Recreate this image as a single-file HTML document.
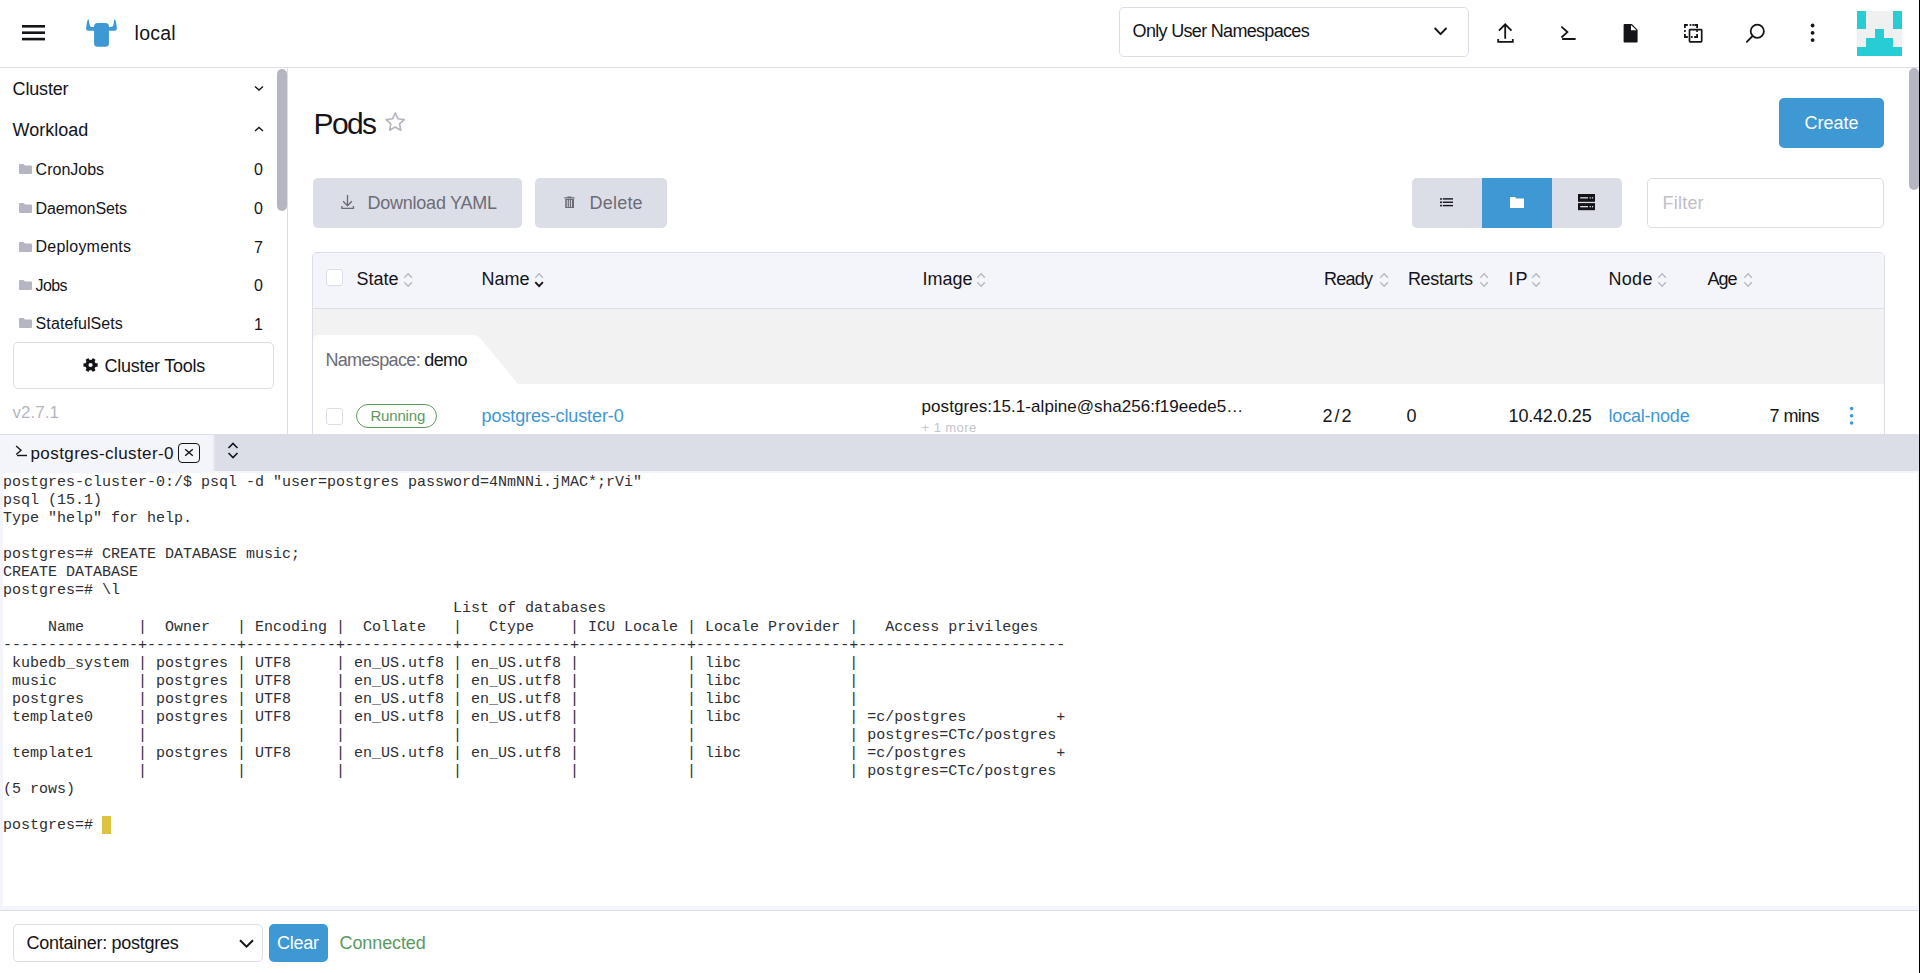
<!DOCTYPE html>
<html><head><meta charset="utf-8"><title>Rancher</title><style>
*{margin:0;padding:0;box-sizing:border-box}
html,body{width:1920px;height:973px;overflow:hidden;background:#fff;font-family:"Liberation Sans", sans-serif}
.a{position:absolute}
.t{position:absolute;white-space:nowrap;line-height:1}
.term{position:absolute;left:3px;top:474px;font-family:"Liberation Mono", monospace;font-size:15px;line-height:18.06px;color:#2e2e34;white-space:pre}
</style></head>
<body>

<!-- header -->
<div class="a" style="left:0;top:67px;width:1920px;height:1px;background:#dcdee7"></div>
<div class="a" style="left:1119px;top:7px;width:350px;height:50px;border:1px solid #dcdee7;border-radius:5px"></div>
<!-- sidebar -->
<div class="a" style="left:287px;top:68px;width:1px;height:366px;background:#dcdee7"></div>
<div class="a" style="left:277px;top:69px;width:10px;height:142px;background:#b6b6c2;border-radius:5px"></div>
<div class="a" style="left:13px;top:342px;width:261px;height:47px;border:1px solid #dcdee7;border-radius:5px"></div>
<!-- main scrollbar -->
<div class="a" style="left:1909px;top:68px;width:10px;height:122px;background:#b6b6c2;border-radius:5px"></div>
<!-- buttons -->
<div class="a" style="left:313px;top:178px;width:209px;height:50px;background:#dcdee7;border-radius:5px"></div>
<div class="a" style="left:535px;top:178px;width:132px;height:50px;background:#dcdee7;border-radius:5px"></div>
<div class="a" style="left:1779px;top:98px;width:105px;height:50px;background:#3d98d3;border-radius:5px"></div>
<div class="a" style="left:1412px;top:178px;width:210px;height:50px;background:#dcdee7;border-radius:5px"></div>
<div class="a" style="left:1482px;top:178px;width:70px;height:50px;background:#3d98d3"></div>
<div class="a" style="left:1647px;top:178px;width:237px;height:50px;border:1px solid #dcdee7;border-radius:5px"></div>
<!-- table -->
<div class="a" style="left:312px;top:252px;width:1573px;height:200px;border:1px solid #dcdee7;border-radius:5px 5px 0 0;background:#fff"></div>
<div class="a" style="left:313px;top:253px;width:1571px;height:55px;background:#f4f5fa;border-radius:4px 4px 0 0"></div>
<div class="a" style="left:313px;top:308px;width:1571px;height:1px;background:#dcdee7"></div>
<div class="a" style="left:313px;top:309px;width:1571px;height:75px;background:#f2f2f2"></div>
<svg class="a" style="left:313px;top:335px" width="210" height="49" viewBox="0 0 210 49"><path d="M0 49 L0 6 Q0 0 6 0 L160 0 Q165 0 168 4 L205 49 Z" fill="#fff"/></svg>
<div class="a" style="left:356px;top:404px;width:81px;height:24px;border:1px solid #5d995d;border-radius:12px"></div>
<!-- terminal panel -->
<div class="a" style="left:0;top:434px;width:1920px;height:539px;background:#f4f5fa"></div>
<div class="a" style="left:0;top:434px;width:1920px;height:1px;background:#dcdee7"></div>
<div class="a" style="left:215px;top:435px;width:1705px;height:36px;background:#dcdee7"></div>
<div class="a" style="left:213px;top:435px;width:2px;height:36px;background:#e8e9f0"></div>
<div class="a" style="left:3px;top:473px;width:1914px;height:433px;background:#fff"></div>
<div class="a" style="left:0;top:910px;width:1920px;height:1px;background:#dcdee7"></div>
<div class="a" style="left:0;top:911px;width:1920px;height:62px;background:#fff"></div>
<div class="a" style="left:13px;top:924px;width:250px;height:38px;border:1px solid #dcdee7;border-radius:5px"></div>
<div class="a" style="left:269px;top:924px;width:59px;height:38px;background:#3d98d3;border-radius:5px"></div>
<div class="a" style="left:102px;top:816px;width:9px;height:18px;background:#dbc33f"></div>

<div id="local" class="t" style="left:134.6px;top:24.19px;font-size:19.5px;color:#141419;letter-spacing:0.250px;">local</div>
<div id="ns" class="t" style="left:1132.6px;top:21.76px;font-size:18px;color:#141419;letter-spacing:-0.684px;">Only User Namespaces</div>
<div id="cluster" class="t" style="left:12.6px;top:79.76px;font-size:18px;color:#141419;letter-spacing:-0.167px;">Cluster</div>
<div id="workload" class="t" style="left:12.6px;top:120.76px;font-size:18px;color:#141419;letter-spacing:0.000px;">Workload</div>
<div id="s0" class="t" style="left:35.6px;top:161.86px;font-size:16px;color:#141419;letter-spacing:0.000px;">CronJobs</div>
<div id="s1" class="t" style="left:35.6px;top:200.86px;font-size:16px;color:#141419;letter-spacing:-0.111px;">DaemonSets</div>
<div id="s2" class="t" style="left:35.6px;top:239.36px;font-size:16px;color:#141419;letter-spacing:0.200px;">Deployments</div>
<div id="s3" class="t" style="left:35.6px;top:277.86px;font-size:16px;color:#141419;letter-spacing:-0.668px;">Jobs</div>
<div id="s4" class="t" style="left:35.6px;top:316.36px;font-size:16px;color:#141419;letter-spacing:0.091px;">StatefulSets</div>
<div id="ctools" class="t" style="left:104.6px;top:357.06px;font-size:18px;color:#141419;letter-spacing:-0.250px;">Cluster Tools</div>
<div id="ver" class="t" style="left:12.6px;top:403.61px;font-size:17px;color:#b6b6c2;letter-spacing:0.000px;">v2.7.1</div>
<div id="pods" class="t" style="left:313.6px;top:109.30px;font-size:30px;color:#141419;letter-spacing:-1.667px;">Pods</div>
<div id="dl" class="t" style="left:367.6px;top:193.76px;font-size:18px;color:#6c6c76;letter-spacing:-0.250px;">Download YAML</div>
<div id="del" class="t" style="left:589.6px;top:193.76px;font-size:18px;color:#6c6c76;letter-spacing:0.200px;">Delete</div>
<div id="create" class="t" style="left:1804.6px;top:113.76px;font-size:18px;color:#ffffff;letter-spacing:0.000px;">Create</div>
<div id="filter" class="t" style="left:1662.6px;top:193.76px;font-size:18px;color:#c0c0ca;letter-spacing:0.200px;">Filter</div>
<div id="h0" class="t" style="left:356.4px;top:270.26px;font-size:18px;color:#141419;letter-spacing:0.000px;">State</div>
<div id="h1" class="t" style="left:481.4px;top:270.26px;font-size:18px;color:#141419;letter-spacing:0.000px;">Name</div>
<div id="h2" class="t" style="left:922.4px;top:270.26px;font-size:18px;color:#141419;letter-spacing:0.000px;">Image</div>
<div id="h3" class="t" style="left:1323.9px;top:270.26px;font-size:18px;color:#141419;letter-spacing:-0.750px;">Ready</div>
<div id="h4" class="t" style="left:1407.9px;top:270.26px;font-size:18px;color:#141419;letter-spacing:-0.285px;">Restarts</div>
<div id="h5" class="t" style="left:1508.4px;top:270.26px;font-size:18px;color:#141419;letter-spacing:2.000px;">IP</div>
<div id="h6" class="t" style="left:1608.4px;top:270.26px;font-size:18px;color:#141419;letter-spacing:0.333px;">Node</div>
<div id="h7" class="t" style="left:1707.4px;top:270.26px;font-size:18px;color:#141419;letter-spacing:-1.000px;">Age</div>
<div id="nsl" class="t" style="left:325.4px;top:350.76px;font-size:18px;color:#141419;letter-spacing:-0.643px;"><span style="color:#6c6c76">Namespace:</span> demo</div>
<div id="run" class="t" style="left:370.4px;top:407.70px;font-size:15px;color:#5d995d;letter-spacing:-0.167px;">Running</div>
<div id="link" class="t" style="left:481.6px;top:406.76px;font-size:18px;color:#3d98d3;letter-spacing:-0.118px;">postgres-cluster-0</div>
<div id="img" class="t" style="left:921.6px;top:398.11px;font-size:17px;color:#141419;letter-spacing:0.056px;">postgres:15.1-alpine@sha256:f19eede5…</div>
<div id="more" class="t" style="left:921.6px;top:420.60px;font-size:13px;color:#c4c4cc;letter-spacing:0.429px;">+ 1 more</div>
<div id="r3" class="t" style="left:1322.6px;top:406.76px;font-size:18px;color:#141419;letter-spacing:2.000px;">2/2</div>
<div id="r4" class="t" style="left:1406.6px;top:406.76px;font-size:18px;color:#141419;letter-spacing:10.000px;">0</div>
<div id="r5" class="t" style="left:1508.6px;top:406.76px;font-size:18px;color:#141419;letter-spacing:-0.222px;">10.42.0.25</div>
<div id="r6" class="t" style="left:1608.6px;top:406.76px;font-size:18px;color:#3d98d3;letter-spacing:-0.222px;">local-node</div>
<div id="r7" class="t" style="left:1769.6px;top:406.76px;font-size:18px;color:#141419;letter-spacing:-0.600px;">7 mins</div>
<div id="tab" class="t" style="left:30.5px;top:444.51px;font-size:17px;color:#141419;letter-spacing:0.412px;">postgres-cluster-0</div>
<div id="cont" class="t" style="left:26.6px;top:933.51px;font-size:18px;color:#141419;letter-spacing:-0.278px;">Container: postgres</div>
<div id="clear" class="t" style="left:277.1px;top:933.51px;font-size:18px;color:#ffffff;letter-spacing:-0.250px;">Clear</div>
<div id="conn" class="t" style="left:339.6px;top:933.51px;font-size:18px;color:#5d995d;letter-spacing:-0.125px;">Connected</div>
<div class="t" style="left:240px;width:23px;text-align:right;top:162.46px;font-size:16px;color:#141419">0</div>
<div class="t" style="left:240px;width:23px;text-align:right;top:201.46px;font-size:16px;color:#141419">0</div>
<div class="t" style="left:240px;width:23px;text-align:right;top:239.96px;font-size:16px;color:#141419">7</div>
<div class="t" style="left:240px;width:23px;text-align:right;top:278.46px;font-size:16px;color:#141419">0</div>
<div class="t" style="left:240px;width:23px;text-align:right;top:316.96px;font-size:16px;color:#141419">1</div>
<svg class="a" style="left:22px;top:24px" width="24" height="17" viewBox="0 0 24 17"><rect x="0" y="1" width="23" height="2.6" fill="#141419"/><rect x="0" y="7.4" width="23" height="2.6" fill="#141419"/><rect x="0" y="13.8" width="23" height="2.6" fill="#141419"/></svg><svg class="a" style="left:85px;top:18px" width="33" height="30" viewBox="0 0 33 30"><rect x="9.05" y="5.1" width="14.9" height="23.7" rx="3.6" fill="#3d98d3"/><path d="M10 8.9 L6.9 8.9 Q4.6 8.9 4.5 6.3 L3.6 1.1 Q2.4 2 1.9 4.5 L1.1 10.6 Q1.1 12.8 3.4 12.8 L10 12.8 Z" fill="#3d98d3"/><path d="M 23 8.9 L 26.1 8.9 Q 28.4 8.9 28.5 6.3 L 29.4 1.1 Q 30.6 2 31.1 4.5 L 31.9 10.6 Q 31.9 12.8 29.6 12.8 L 23 12.8 Z" fill="#3d98d3"/></svg><svg class="a" style="left:1433px;top:26px" width="16" height="11" viewBox="0 0 16 11"><path d="M2.2 2.5 L7.6 8.2 L13 2.5" fill="none" stroke="#141419" stroke-width="1.9" stroke-linecap="round" stroke-linejoin="round"/></svg><svg class="a" style="left:1496px;top:23px" width="20" height="21" viewBox="0 0 20 21"><path d="M9.2 1.6 L9.2 15.7 M2.9 7.6 L9.2 1.3 L15.5 7.6 M2.2 16 L2.2 18.8 L16.8 18.8 L16.8 16" fill="none" stroke="#141419" stroke-width="1.8"/></svg><svg class="a" style="left:1560px;top:25px" width="17" height="17" viewBox="0 0 17 17"><path d="M1.4 1.7 L7.4 7.1 L1.4 12.5" fill="none" stroke="#141419" stroke-width="1.8"/><path d="M2.9 14 L14.9 14" stroke="#141419" stroke-width="1.9" stroke-linecap="round"/></svg><svg class="a" style="left:1623px;top:24px" width="15" height="19" viewBox="0 0 15 19"><path d="M0.6 0.9 Q0.6 0.1 1.4 0.1 L8.8 0.1 L14.6 5.8 L14.6 17.8 Q14.6 18.6 13.8 18.6 L1.4 18.6 Q0.6 18.6 0.6 17.8 Z" fill="#141419"/><path d="M8 0.9 L8 6.2 L13.6 6.2 Z" fill="#fff"/></svg><svg class="a" style="left:1683px;top:23px" width="21" height="21" viewBox="0 0 21 21"><rect x="6.5" y="6.6" width="12.2" height="12.2" rx="0.6" fill="none" stroke="#141419" stroke-width="1.7"/><path d="M1.9 5 L1.9 2 L4.8 2 M11.4 2 L14.1 2 L14.1 5 M14.1 11.1 L14.1 14 L11.2 14 M4.8 14 L1.9 14 L1.9 11.1" fill="none" stroke="#fff" stroke-width="3.2"/><path d="M1.9 5 L1.9 2 L4.8 2 M11.4 2 L14.1 2 L14.1 5 M14.1 11.1 L14.1 14 L11.2 14 M4.8 14 L1.9 14 L1.9 11.1" fill="none" stroke="#141419" stroke-width="1.8"/><g fill="#141419"><rect x="6.6" y="1.1" width="1.8" height="1.8"/><rect x="9.3" y="1.1" width="1.8" height="1.8"/><rect x="1" y="7.1" width="1.8" height="1.8"/><rect x="13.2" y="7.1" width="1.8" height="1.8"/><rect x="7.9" y="13.1" width="1.8" height="1.8"/></g></svg><svg class="a" style="left:1745px;top:23px" width="21" height="21" viewBox="0 0 21 21"><circle cx="12.3" cy="8.2" r="6.6" fill="none" stroke="#141419" stroke-width="1.8"/><path d="M7.6 13 L1.8 18.8" stroke="#141419" stroke-width="1.8" stroke-linecap="round"/></svg><svg class="a" style="left:1809px;top:23px" width="7" height="20" viewBox="0 0 7 20"><circle cx="3.6" cy="2.5" r="1.9" fill="#141419"/><circle cx="3.6" cy="9.8" r="1.9" fill="#141419"/><circle cx="3.6" cy="17.1" r="1.9" fill="#141419"/></svg><svg class="a" style="left:1857px;top:11px" width="45" height="45" viewBox="0 0 5 5" shape-rendering="crispEdges"><rect width="5" height="5" fill="#f0f0f0"/><rect x="0" y="0" width="1" height="2" fill="#27ccd4"/><rect x="4" y="0" width="1" height="2" fill="#27ccd4"/><rect x="2" y="2" width="1" height="1" fill="#27ccd4"/><rect x="1" y="3" width="3" height="1" fill="#27ccd4"/><rect x="0" y="4" width="5" height="1" fill="#27ccd4"/></svg><svg class="a" style="left:253px;top:84px" width="12" height="8" viewBox="0 0 12 8"><path d="M2 2.5 L6 6.1 L10 2.5" fill="none" stroke="#141419" stroke-width="1.4"/></svg><svg class="a" style="left:253px;top:125px" width="12" height="8" viewBox="0 0 12 8"><path d="M2 6 L6 2.4 L10 6" fill="none" stroke="#141419" stroke-width="1.4"/></svg><svg class="a" style="left:19px;top:164px" width="13" height="10" viewBox="0 0 13 10"><path d="M0 1 Q0 0 1 0 L4.5 0 L6 1.5 L12 1.5 Q13 1.5 13 2.5 L13 9 Q13 10 12 10 L1 10 Q0 10 0 9 Z" fill="#b6b6c2"/></svg><svg class="a" style="left:19px;top:203px" width="13" height="10" viewBox="0 0 13 10"><path d="M0 1 Q0 0 1 0 L4.5 0 L6 1.5 L12 1.5 Q13 1.5 13 2.5 L13 9 Q13 10 12 10 L1 10 Q0 10 0 9 Z" fill="#b6b6c2"/></svg><svg class="a" style="left:19px;top:242px" width="13" height="10" viewBox="0 0 13 10"><path d="M0 1 Q0 0 1 0 L4.5 0 L6 1.5 L12 1.5 Q13 1.5 13 2.5 L13 9 Q13 10 12 10 L1 10 Q0 10 0 9 Z" fill="#b6b6c2"/></svg><svg class="a" style="left:19px;top:280px" width="13" height="10" viewBox="0 0 13 10"><path d="M0 1 Q0 0 1 0 L4.5 0 L6 1.5 L12 1.5 Q13 1.5 13 2.5 L13 9 Q13 10 12 10 L1 10 Q0 10 0 9 Z" fill="#b6b6c2"/></svg><svg class="a" style="left:19px;top:318px" width="13" height="10" viewBox="0 0 13 10"><path d="M0 1 Q0 0 1 0 L4.5 0 L6 1.5 L12 1.5 Q13 1.5 13 2.5 L13 9 Q13 10 12 10 L1 10 Q0 10 0 9 Z" fill="#b6b6c2"/></svg><svg class="a" style="left:83px;top:357px" width="16" height="16" viewBox="0 0 16 16"><g transform="translate(7.56 8)" fill="#141419"><circle r="5.3"/><rect x="-7.1" y="-1.7" width="14.2" height="3.4" rx="0.5"/><rect x="-7.1" y="-1.7" width="14.2" height="3.4" rx="0.5" transform="rotate(60)"/><rect x="-7.1" y="-1.7" width="14.2" height="3.4" rx="0.5" transform="rotate(120)"/><circle r="2.1" fill="#fff"/></g></svg><svg class="a" style="left:385px;top:111px" width="21" height="22" viewBox="0 0 21 22"><path d="M10.20 2.00 L12.90 7.78 L19.24 8.56 L14.57 12.92 L15.78 19.19 L10.20 16.10 L4.62 19.19 L5.83 12.92 L1.16 8.56 L7.50 7.78 Z" fill="none" stroke="#b6b6c2" stroke-width="1.7" stroke-linejoin="round"/></svg><svg class="a" style="left:340px;top:194px" width="15" height="16" viewBox="0 0 15 16"><path d="M7.5 1 L7.5 11.6 M3.1 7.3 L7.5 11.8 L11.9 7.3 M1.9 12 L1.9 14.4 L13.4 14.4 L13.4 12" fill="none" stroke="#6c6c76" stroke-width="1.35"/></svg><svg class="a" style="left:564px;top:196px" width="11" height="13" viewBox="0 0 11 13"><path d="M3.6 0.5 L7.2 0.5 L7.6 1.2 L10.6 1.2 L10.6 2.4 L0.3 2.4 L0.3 1.2 L3.2 1.2 Z" fill="#6c6c76"/><path d="M1.2 2.9 L10 2.9 L10 12 L1.2 12 Z M2.8 4.1 L2.8 10.9 L3.7 10.9 L3.7 4.1 Z M4.9 4.1 L4.9 10.9 L5.8 10.9 L5.8 4.1 Z M7 4.1 L7 10.9 L7.9 10.9 L7.9 4.1 Z" fill="#6c6c76" fill-rule="evenodd"/></svg><svg class="a" style="left:1440px;top:197px" width="14" height="11" viewBox="0 0 14 11"><g fill="#141419"><rect x="0.1" y="1" width="1.8" height="1.8" rx="0.4"/><rect x="0.1" y="4.35" width="1.8" height="1.8" rx="0.4"/><rect x="0.1" y="7.7" width="1.8" height="1.8" rx="0.4"/><rect x="2.8" y="1.2" width="10.2" height="1.4"/><rect x="2.8" y="4.55" width="10.2" height="1.4"/><rect x="2.8" y="7.9" width="10.2" height="1.4"/></g></svg><svg class="a" style="left:1509.7px;top:196.7px" width="14.3" height="11.1" viewBox="0 0 13 10"><path d="M0 0.6 Q0 0 0.6 0 L4.5 0 L5.8 1.4 L12.4 1.4 Q13 1.4 13 2 L13 9.4 Q13 10 12.4 10 L0.6 10 Q0 10 0 9.4 Z" fill="#fff"/></svg><svg class="a" style="left:1578px;top:194px" width="17" height="17" viewBox="0 0 17 17"><rect x="0" y="0" width="17" height="7.8" fill="#141419"/><rect x="0" y="9.1" width="17" height="7.1" fill="#141419"/><g fill="#dcdee7"><rect x="2.2" y="3.2" width="7.8" height="1.3"/><rect x="11.6" y="3.2" width="1.3" height="1.3"/><rect x="13.9" y="3.2" width="1.3" height="1.3"/><rect x="2.2" y="12" width="7.8" height="1.3"/><rect x="11.6" y="12" width="1.3" height="1.3"/><rect x="13.9" y="12" width="1.3" height="1.3"/></g></svg><svg class="a" style="left:403px;top:271.5px" width="11" height="16" viewBox="0 0 11 16"><path d="M1.3 5.8 L5.1 1.8 L8.9 5.8" fill="none" stroke="#b6b6c2" stroke-width="1.3"/><path d="M1.3 10.2 L5.1 14.2 L8.9 10.2" fill="none" stroke="#b6b6c2" stroke-width="1.3"/></svg><svg class="a" style="left:534px;top:271.5px" width="11" height="16" viewBox="0 0 11 16"><path d="M1.3 5.8 L5.1 1.8 L8.9 5.8" fill="none" stroke="#b6b6c2" stroke-width="1.3"/><path d="M1.3 10.2 L5.1 14.2 L8.9 10.2" fill="none" stroke="#141419" stroke-width="1.9"/></svg><svg class="a" style="left:976px;top:271.5px" width="11" height="16" viewBox="0 0 11 16"><path d="M1.3 5.8 L5.1 1.8 L8.9 5.8" fill="none" stroke="#b6b6c2" stroke-width="1.3"/><path d="M1.3 10.2 L5.1 14.2 L8.9 10.2" fill="none" stroke="#b6b6c2" stroke-width="1.3"/></svg><svg class="a" style="left:1378.5px;top:271.5px" width="11" height="16" viewBox="0 0 11 16"><path d="M1.3 5.8 L5.1 1.8 L8.9 5.8" fill="none" stroke="#b6b6c2" stroke-width="1.3"/><path d="M1.3 10.2 L5.1 14.2 L8.9 10.2" fill="none" stroke="#b6b6c2" stroke-width="1.3"/></svg><svg class="a" style="left:1478.5px;top:271.5px" width="11" height="16" viewBox="0 0 11 16"><path d="M1.3 5.8 L5.1 1.8 L8.9 5.8" fill="none" stroke="#b6b6c2" stroke-width="1.3"/><path d="M1.3 10.2 L5.1 14.2 L8.9 10.2" fill="none" stroke="#b6b6c2" stroke-width="1.3"/></svg><svg class="a" style="left:1531px;top:271.5px" width="11" height="16" viewBox="0 0 11 16"><path d="M1.3 5.8 L5.1 1.8 L8.9 5.8" fill="none" stroke="#b6b6c2" stroke-width="1.3"/><path d="M1.3 10.2 L5.1 14.2 L8.9 10.2" fill="none" stroke="#b6b6c2" stroke-width="1.3"/></svg><svg class="a" style="left:1657px;top:271.5px" width="11" height="16" viewBox="0 0 11 16"><path d="M1.3 5.8 L5.1 1.8 L8.9 5.8" fill="none" stroke="#b6b6c2" stroke-width="1.3"/><path d="M1.3 10.2 L5.1 14.2 L8.9 10.2" fill="none" stroke="#b6b6c2" stroke-width="1.3"/></svg><svg class="a" style="left:1743px;top:271.5px" width="11" height="16" viewBox="0 0 11 16"><path d="M1.3 5.8 L5.1 1.8 L8.9 5.8" fill="none" stroke="#b6b6c2" stroke-width="1.3"/><path d="M1.3 10.2 L5.1 14.2 L8.9 10.2" fill="none" stroke="#b6b6c2" stroke-width="1.3"/></svg><div class="a" style="left:326px;top:269px;width:17px;height:17px;border:1px solid #dcdee7;border-radius:3px;background:#fff"></div><div class="a" style="left:326px;top:408px;width:17px;height:17px;border:1px solid #dcdee7;border-radius:3px;background:#fff"></div><svg class="a" style="left:1848px;top:406px" width="7" height="19" viewBox="0 0 7 19"><circle cx="3.6" cy="2.6" r="1.8" fill="#3d98d3"/><circle cx="3.6" cy="9.8" r="1.8" fill="#3d98d3"/><circle cx="3.6" cy="17" r="1.8" fill="#3d98d3"/></svg><svg class="a" style="left:15px;top:445px" width="13" height="12" viewBox="0 0 13 12"><path d="M1.1 1.1 L6 5.3 L1.2 9.4" fill="none" stroke="#141419" stroke-width="1.35"/><path d="M2 10.5 L12 10.5" stroke="#141419" stroke-width="1.4"/></svg><div class="a" style="left:178px;top:443px;width:22px;height:20px;border:1.5px solid #141419;border-radius:4px"></div><svg class="a" style="left:184px;top:448px" width="10" height="9" viewBox="0 0 10 9"><path d="M1.2 1.2 L8.8 7.8 M8.8 1.2 L1.2 7.8" stroke="#141419" stroke-width="1.4"/></svg><svg class="a" style="left:227px;top:442px" width="12" height="17" viewBox="0 0 12 17"><path d="M1.5 6 L6 1.5 L10.5 6 M1.5 11 L6 15.5 L10.5 11" fill="none" stroke="#141419" stroke-width="1.6"/></svg><svg class="a" style="left:238px;top:938px" width="17" height="11" viewBox="0 0 17 11"><path d="M2 2.2 L8.5 8.6 L15 2.2" fill="none" stroke="#141419" stroke-width="2"/></svg>
<div class="term">postgres-cluster-0:/$ psql -d "user=postgres password=4NmNNi.jMAC*;rVi"
psql (15.1)
Type "help" for help.

postgres=# CREATE DATABASE music;
CREATE DATABASE
postgres=# \l
                                                  List of databases
     Name      |  Owner   | Encoding |  Collate   |   Ctype    | ICU Locale | Locale Provider |   Access privileges
---------------+----------+----------+------------+------------+------------+-----------------+-----------------------
 kubedb_system | postgres | UTF8     | en_US.utf8 | en_US.utf8 |            | libc            |
 music         | postgres | UTF8     | en_US.utf8 | en_US.utf8 |            | libc            |
 postgres      | postgres | UTF8     | en_US.utf8 | en_US.utf8 |            | libc            |
 template0     | postgres | UTF8     | en_US.utf8 | en_US.utf8 |            | libc            | =c/postgres          +
               |          |          |            |            |            |                 | postgres=CTc/postgres
 template1     | postgres | UTF8     | en_US.utf8 | en_US.utf8 |            | libc            | =c/postgres          +
               |          |          |            |            |            |                 | postgres=CTc/postgres
(5 rows)

postgres=# </div>
<div class="a" style="left:1919px;top:0;width:1px;height:973px;background:#000"></div>
</body></html>
